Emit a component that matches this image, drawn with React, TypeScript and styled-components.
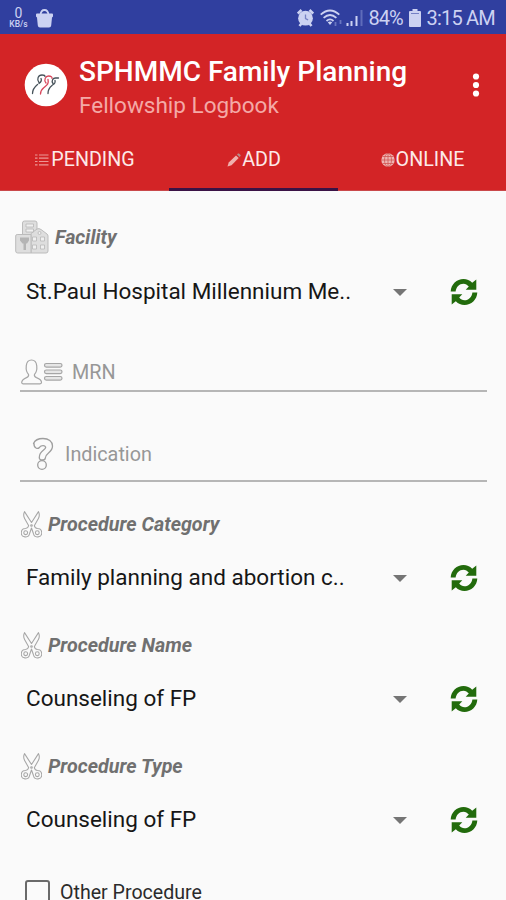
import React from 'react';
import styled, { createGlobalStyle } from 'styled-components';

const GlobalStyle = createGlobalStyle`
  *, *::before, *::after { box-sizing: border-box; }
  body { margin: 0; background: #fafafa; font-family: Roboto, 'Liberation Sans', sans-serif; }
`;

const Screen = styled.div`
  width: 506px;
  height: 900px;
  overflow: hidden;
  background: #fafafa;
  display: flex;
  flex-direction: column;
`;

const StatusBar = styled.header`
  flex: none;
  height: 34px;
  background: #303f9f;
  color: #ccd2f2;
  display: flex;
  align-items: center;
  padding: 2px 11px 0 8px;
`;

const NetSpeed = styled.div`
  width: 21px;
  display: flex;
  flex-direction: column;
  align-items: center;
  font-size: 14px;
  line-height: 13px;
  white-space: nowrap;
  small { font-size: 8.5px; line-height: 9px; font-weight: 500; }
`;

const StatusGroup = styled.div`
  margin-left: auto;
  display: flex;
  align-items: center;
`;

const StatusText = styled.span<{ $tracking: number }>`
  font-size: 20px;
  line-height: 24px;
  white-space: nowrap;
  letter-spacing: ${p => p.$tracking}px;
`;

const Icon = styled.svg<{ $ml?: number; $mr?: number }>`
  flex: none;
  display: block;
  margin-left: ${p => p.$ml ?? 0}px;
  margin-right: ${p => p.$mr ?? 0}px;
`;

const AppBar = styled.div`
  flex: none;
  height: 157px;
  background: #d32426;
  border-bottom: 1px solid #c9484a;
  display: flex;
  flex-direction: column;
`;

const Toolbar = styled.div`
  height: 101px;
  display: flex;
  align-items: center;
  padding: 0 26px 0 24px;
`;

const Titles = styled.div`
  margin-left: 11px;
  padding-top: 6px;
  flex: 1;
  white-space: nowrap;
`;

const Title = styled.h1`
  margin: 0;
  font-size: 28px;
  line-height: 36px;
  font-weight: 500;
  color: #fff;
`;

const Subtitle = styled.div`
  font-size: 22.5px;
  line-height: 31px;
  color: #f4a9a6;
`;

const MenuButton = styled.button`
  border: 0;
  padding: 0;
  background: none;
  display: flex;
`;

const Tabs = styled.nav`
  flex: 1;
  display: grid;
  grid-template-columns: 169px 169px 168px;
`;

const Tab = styled.div<{ $active?: boolean }>`
  display: flex;
  align-items: center;
  justify-content: center;
  padding-top: 4px;
  padding-bottom: 8px;
  padding-left: 1px;
  font-size: 19.7px;
  color: #fde9e8;
  border-bottom: 3px solid ${p => (p.$active ? '#3a1346' : 'transparent')};
  margin-bottom: -1px;
`;

const Form = styled.main`
  flex: 1;
  display: flex;
  flex-direction: column;
  padding: 26px 20px 0;
`;

const FieldLabel = styled.div<{ $h: number; $mt?: number; $indent?: number }>`
  flex: none;
  height: ${p => p.$h}px;
  margin-top: ${p => p.$mt ?? 0}px;
  margin-left: ${p => p.$indent ?? 0}px;
  display: flex;
  align-items: center;
  font-size: 19.7px;
  font-weight: 700;
  font-style: italic;
  color: #707070;
  white-space: nowrap;
`;

const SelectRow = styled.div<{ $h: number }>`
  flex: none;
  height: ${p => p.$h}px;
  padding: 0 8px 0 6px;
  display: flex;
  align-items: center;
`;

const SelectValue = styled.span`
  flex: 1;
  padding-bottom: 2px;
  font-size: 22.5px;
  line-height: 30px;
  color: #161616;
  white-space: nowrap;
`;

const TextRow = styled.div<{ $h: number; $pl: number; $pb: number }>`
  flex: none;
  height: ${p => p.$h}px;
  padding-left: ${p => p.$pl}px;
  padding-bottom: ${p => p.$pb}px;
  margin-right: -1px;
  border-bottom: 2px solid #b6b6b6;
  display: flex;
  align-items: flex-end;
`;

const Placeholder = styled.span<{ $ml: number; $mb: number }>`
  margin-left: ${p => p.$ml}px;
  margin-bottom: ${p => p.$mb}px;
  font-size: 19.8px;
  line-height: 24px;
  color: #979797;
`;

const CheckRow = styled.label`
  flex: none;
  display: flex;
  align-items: flex-start;
  padding: 35px 0 0 5px;
  font-size: 19.6px;
  line-height: 26px;
  color: #2b2b2b;
  white-space: nowrap;
`;

const CheckBox = styled.span`
  width: 25px;
  height: 25px;
  margin-right: 10px;
  border: 2px solid #6a6a6a;
  border-radius: 3px;
`;

const BagIcon = () => (
  <Icon $ml={7} width="17" height="19" viewBox="0 0 17 19">
    <path d="M4.500 6Q5 1 8.500 1T12.500 6" fill="none" stroke="#ccd2f2" strokeWidth="1.800" />
    <path d="M1 4.500h15q1 0 1 1v2l-1 1-.8 8q-.2 2-2.200 2H4q-2 0-2.200-2l-.8-8-1-1v-2q0-1 1-1z" fill="#ccd2f2" />
  </Icon>
);

const AlarmIcon = () => (
  <Icon $mr={6} width="17" height="18" viewBox="0 0 17 18">
    <path d="M.8 4.500L4.500 1M16.200 4.500L12.500 1M2.500 17l2-2.500M14.500 17l-2-2.500" stroke="#ccd2f2" strokeWidth="2.600" />
    <circle cx="8.500" cy="9.200" r="7.400" fill="#ccd2f2" />
    <path d="M8.500 5.500v4l2.600 1.400" fill="none" stroke="#7782c4" strokeWidth="1.300" />
  </Icon>
);

const WifiIcon = () => (
  <Icon $mr={3} width="23" height="18" viewBox="0 0 23 18">
    <g fill="none" stroke="#ccd2f2" strokeWidth="1.800">
      <path d="M.7 5.600Q10 -2.600 19.300 5.600M3.600 8.900Q10 3.200 16.400 8.900M6.500 12Q10 8.700 13.500 12" />
    </g>
    <path d="M7.800 13.300q2.200-1.600 4.400 0L10 16z" fill="#ccd2f2" />
    <path d="M15.500 13v4M20.500 11v4" stroke="#6976c0" strokeWidth="1.800" />
  </Icon>
);

const SignalIcon = () => (
  <Icon $mr={5} width="17" height="18" viewBox="0 0 17 18">
    <path d="M1.500 17v-3M5.500 17v-5" stroke="#ccd2f2" strokeWidth="2" />
    <path d="M10.500 17V7" stroke="#ccd2f2" strokeWidth="2" />
    <path d="M15.500 17V1" stroke="#5f6cba" strokeWidth="2" />
  </Icon>
);

const BatteryIcon = () => (
  <Icon $ml={6} $mr={6} width="12" height="18" viewBox="0 0 12 18">
    <path d="M3.500 0h5v2H11a1 1 0 0 1 1 1v14a1 1 0 0 1-1 1H1a1 1 0 0 1-1-1V3a1 1 0 0 1 1-1h2.500z" fill="#ccd2f2" />
    <path d="M2 4.500h8" stroke="#7480c4" />
  </Icon>
);

const Logo = () => (
  <Icon width="44" height="44" viewBox="0 0 44 44">
    <circle cx="22" cy="22" r="21.300" fill="#fff" />
    <g fill="none" strokeWidth="1.300" strokeLinecap="round">
      <path d="M8.500 30.500c0-4 2-6.500 5-9M15 19.500c-2.500-3-1-7.500 3-7.500 2 0 3 1 3 1.500M15 20.500c2-1.500 3-3 2-5" stroke="#46525a" />
      <path d="M16.500 31c0-3 1-4.500 3.500-6.500 3-2.500 5-3.500 4-8M22 20c-2.500-3-.5-7 2.500-7 2.500 0 4 1 3.500 2.500" stroke="#d8475c" />
      <path d="M24 30.500c0-3.500 1.500-6 4-8M29 20.500c-2-2.500 0-5.500 2.500-5.500h3M28.500 22c2-1 3-2.500 2.500-4.500" stroke="#46525a" />
    </g>
  </Icon>
);

const MoreIcon = () => (
  <Icon width="8" height="26" viewBox="0 0 8 26">
    <g fill="#fff">
      <circle cx="4" cy="4.500" r="3.100" />
      <circle cx="4" cy="13" r="3.100" />
      <circle cx="4" cy="21.500" r="3.100" />
    </g>
  </Icon>
);

const ListIcon = () => (
  <Icon $mr={2} width="14" height="14" viewBox="0 0 14 14">
    <path d="M0 2h2.500M0 5.200h2.500M0 8.500h2.500M0 11.800h2.500M4 2h9.500M4 5.200h9.500M4 8.500h9.500M4 11.800h9.500" stroke="#ec9795" strokeWidth="1.200" />
  </Icon>
);

const PencilIcon = () => (
  <Icon $mr={1} width="14" height="14" viewBox="0 0 14 14">
    <path d="M.5 13.500l1.200-4L9 2.400l2.700 2.700L4.500 12.300z" fill="#f0b0ad" />
    <path d="M10 1.500L11 .6q.5-.4 1 0l1.500 1.500q.4.500 0 1l-1 1z" fill="#b58d8c" />
  </Icon>
);

const GlobeIcon = () => (
  <Icon $mr={1} width="14" height="14" viewBox="0 0 14 14">
    <circle cx="7" cy="7" r="6.700" fill="#efb5b3" />
    <g fill="none" stroke="#cf5553" strokeWidth=".8">
      <path d="M7 0v14M0 7h14M1.500 3.500h11M1.500 10.500h11" />
      <ellipse cx="7" cy="7" rx="3.500" ry="6.700" />
    </g>
  </Icon>
);

const HospitalIcon = () => (
  <Icon $mr={6} width="34" height="34" viewBox="0 0 34 34">
    <g fill="#dedede" stroke="#bcbcbc" strokeWidth="1" strokeLinejoin="round">
      <path d="M7.500 15V3q0-2 2-2H20q2 0 2 2v10" />
      <path d="M16 33V13.500l6-4.500q2-1 4 .5l6 4.500q1 1 1 2V31q0 2-2 2z" />
      <path d="M.7 31V16q0-1.500 1.500-1.500H16V33H2.700q-2 0-2-2z" />
    </g>
    <g fill="#f0f0f0" stroke="#b8b8b8" strokeWidth=".8">
      <path d="M11 4h7.500v3H11zM11 9h7.500v3H11zM17.500 17h4v4h-4zM25.500 17h4v4h-4zM17.500 25h4v4h-4zM25.500 25h4v4h-4z" />
      <circle cx="24.500" cy="13" r="1.500" />
    </g>
    <path d="M5 17.500h9v3l-2 3h-1V30H8.500v-6.500h-1L5 20.500z" fill="#b4b4b4" />
  </Icon>
);

const PersonIcon = () => (
  <Icon width="42" height="26" viewBox="0 0 42 26">
    <g fill="none" stroke="#a6a6a6" strokeWidth="1.200" strokeLinejoin="round">
      <path d="M7.500 15.300C4.500 12 5 9.500 5.300 6.500 5.700 3 7.500 1 10.500 1s4.800 2 5.200 5.500c.3 3 .8 5.500-2.200 8.800-.6 2 .3 2.600 2 3.300 3.200 1.200 5.200 2.600 5 5q0 1.200-1.500 1.200H2Q.7 24.800.7 23.600c0-2.400 1.800-3.800 4.800-5 1.700-.7 2.600-1.300 2-3.300z" />
      <g fill="#e6e6e6">
        <rect x="23.500" y="4.500" width="17.500" height="3.600" rx="1.800" />
        <rect x="23.500" y="11" width="17.500" height="3.600" rx="1.800" />
        <rect x="23.500" y="17.500" width="17.500" height="3.600" rx="1.800" />
      </g>
    </g>
  </Icon>
);

const QuestionIcon = () => (
  <Icon width="22" height="34" viewBox="0 0 22 34">
    <g fill="none" stroke="#9e9e9e" strokeWidth="1.300" strokeLinejoin="round">
      <path d="M1.500 6.500C3 3 6.500 1.500 11 1.500c5.500 0 9.500 3 9.500 7.500 0 3.200-1.600 5-4 6.900-2.300 1.900-3.200 3-3.200 5.100q0 2-3 2t-3-2.500c0-3.500 1.300-5.300 4-7.300 1.800-1.300 2.700-2.200 2.300-3.200-.6-1.300-1.500-1.500-3.100-1.300-2 .2-2.700 1-3.400 2.100q-1.200 1.200-3 .2-2.400-1.500-2.100-4.500z" />
      <circle cx="10" cy="28" r="4.300" />
    </g>
  </Icon>
);

const ScissorsIcon = () => (
  <Icon $ml={1} $mr={6} width="21" height="27" viewBox="0 0 21 27">
    <g fill="none" stroke="#a6a6a6" strokeWidth="1.050" strokeLinejoin="round">
      <path d="M3.500 .6C2.400 3 2.500 5.500 3.600 7.500l4.100 7.200c-.4 2-1.500 2.600-3.200 2.800A4.200 4.200 0 1 0 8.600 22.500l1.900-5.500 1.900 5.500a4.200 4.200 0 1 0 4.100-5c-1.700-.2-2.800-.8-3.200-2.800L17.400 7.500c1.100-2 1.200-4.500.1-6.900l-7 10.900z" />
      <circle cx="4.700" cy="21.700" r="1.900" />
      <circle cx="16.300" cy="21.700" r="1.900" />
      <circle cx="10.500" cy="14.500" r=".8" />
    </g>
  </Icon>
);

const Caret = () => (
  <Icon width="14" height="7" viewBox="0 0 14 7">
    <path d="M0 0h14L7 7z" fill="#757575" />
  </Icon>
);

const RefreshIcon = () => (
  <Icon $ml={43} width="28" height="28" viewBox="0 0 28 28">
    <g fill="#226b0c">
      <path d="M.7 13.500C.9 6.300 6.800 1 13.500 1c3.500 0 6.200 1.200 8.700 3.700L26.300 1.500v10.300H15.700l3.100-3.300C17.300 6.800 15.600 5.700 13.500 5.700c-4.300 0-7.300 3.200-7.900 7.800z" />
      <path d="M27.300 14.500C27.100 21.700 21.200 27 14.500 27c-3.500 0-6.200-1.200-8.700-3.700L1.700 26.500V16.200h10.600l-3.100 3.300c1.500 1.700 3.200 2.800 5.300 2.800 4.300 0 7.300-3.200 7.900-7.800z" />
    </g>
  </Icon>
);

const Select = ({ value, height }: { value: string; height: number }) => (
  <SelectRow $h={height}>
    <SelectValue>{value}</SelectValue>
    <Caret />
    <RefreshIcon />
  </SelectRow>
);

const procedures = [
  { label: 'Procedure Category', value: 'Family planning and abortion c..' },
  { label: 'Procedure Name', value: 'Counseling of FP' },
  { label: 'Procedure Type', value: 'Counseling of FP' },
];

export default function App() {
  return (
    <Screen>
      <GlobalStyle />
      <StatusBar>
        <NetSpeed><span>0</span><small>KB/s</small></NetSpeed>
        <BagIcon />
        <StatusGroup>
          <AlarmIcon />
          <WifiIcon />
          <SignalIcon />
          <StatusText $tracking={-1}>84%</StatusText>
          <BatteryIcon />
          <StatusText $tracking={-0.8}>3:15 AM</StatusText>
        </StatusGroup>
      </StatusBar>
      <AppBar>
        <Toolbar>
          <Logo />
          <Titles>
            <Title>SPHMMC Family Planning</Title>
            <Subtitle>Fellowship Logbook</Subtitle>
          </Titles>
          <MenuButton aria-label="More options"><MoreIcon /></MenuButton>
        </Toolbar>
        <Tabs>
          <Tab><ListIcon />PENDING</Tab>
          <Tab $active><PencilIcon />ADD</Tab>
          <Tab><GlobeIcon />ONLINE</Tab>
        </Tabs>
      </AppBar>
      <Form>
        <FieldLabel $h={40} $indent={-5}><HospitalIcon />Facility</FieldLabel>
        <Select value="St.Paul Hospital Millennium Me.." height={70} />
        <TextRow $h={65} $pl={1} $pb={5}>
          <PersonIcon />
          <Placeholder $ml={9} $mb={0}>MRN</Placeholder>
        </TextRow>
        <TextRow $h={90} $pl={12} $pb={9}>
          <QuestionIcon />
          <Placeholder $ml={11} $mb={4}>Indication</Placeholder>
        </TextRow>
        {procedures.map(p => (
          <React.Fragment key={p.label}>
            <FieldLabel $h={58} $mt={13}><ScissorsIcon />{p.label}</FieldLabel>
            <Select value={p.value} height={50} />
          </React.Fragment>
        ))}
        <CheckRow><CheckBox />Other Procedure</CheckRow>
      </Form>
    </Screen>
  );
}
